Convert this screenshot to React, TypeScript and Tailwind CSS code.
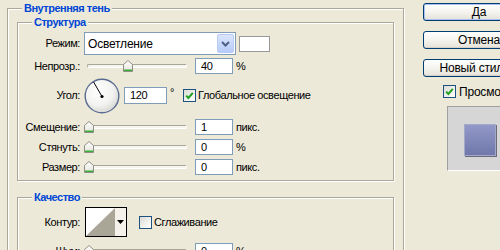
import type { ReactNode } from 'react';

const Thumb = () => (
  <svg width="10" height="12" viewBox="0 0 10 12">
    <defs>
      <linearGradient id="thumbFill" x1="0" y1="0" x2="0" y2="1">
        <stop offset="0" stopColor="#ffffff" />
        <stop offset="1" stopColor="#e4e3db" />
      </linearGradient>
    </defs>
    <path d="M0.5 4.5 L5 0.5 L9.5 4.5 V11.5 H0.5 Z" fill="url(#thumbFill)" stroke="#8f8e84" />
    <rect x="1" y="9.5" width="8" height="1.5" fill="#3aae3a" />
  </svg>
);

const Slider = ({ value }: { value: number }) => (
  <div className="relative w-[106px] h-[12px]">
    <div className="absolute left-[3px] right-[3px] top-[4px] h-[4px] rounded-[2px] border border-[#a9a699] border-b-white border-r-white bg-[#f6f5f0]" />
    <div className="absolute top-0" style={{ left: value }}>
      <Thumb />
    </div>
  </div>
);

const Field = ({ value, className = '' }: { value: string; className?: string }) => (
  <div className={`h-[16px] w-[38px] border border-[#7f9db9] bg-white pl-[5px] leading-[14px] text-black ${className}`}>
    {value}
  </div>
);

const Check = ({ checked }: { checked: boolean }) => (
  <div className="w-[13px] h-[13px] shrink-0 border border-[#1c5180] bg-linear-to-br from-[#dcdcd5] to-white flex items-center justify-center">
    {checked && (
      <svg width="11" height="11" viewBox="0 0 11 11">
        <path d="M2.2 5.6 L4.4 8 L8.8 2.8" fill="none" stroke="#21a121" strokeWidth="2" />
      </svg>
    )}
  </div>
);

const Label = ({ children }: { children: ReactNode }) => (
  <span className="w-[62px] text-right whitespace-nowrap">{children}</span>
);

const Group = ({ title, className = '', children }: { title: string; className?: string; children: ReactNode }) => (
  <div className={`relative border border-[#aca899] shadow-[inset_1px_1px_0_#fff,1px_1px_0_#fff] ${className}`}>
    <span className="absolute -top-[7px] left-[14px] bg-[#ece9d8] px-[2px] leading-[13px] font-bold tracking-[-0.5px] text-[#0046d5] whitespace-nowrap">
      {title}
    </span>
    {children}
  </div>
);

const Dial = () => (
  <svg width="36" height="36" viewBox="0 0 36 36">
    <defs>
      <radialGradient id="dialFill" cx="0.4" cy="0.35" r="0.7">
        <stop offset="0" stopColor="#ffffff" />
        <stop offset="0.6" stopColor="#f3f3f1" />
        <stop offset="1" stopColor="#d4d4d0" />
      </radialGradient>
    </defs>
    <circle cx="18" cy="18" r="16.8" fill="url(#dialFill)" stroke="#5a6b92" strokeWidth="1.4" />
    <line x1="18" y1="18.5" x2="9.6" y2="4" stroke="#000" strokeWidth="1" />
    <circle cx="18" cy="18.5" r="1.6" fill="#000" />
  </svg>
);

const Button = ({ children, primary = false }: { children: ReactNode; primary?: boolean }) => (
  <div
    className={`w-[112px] h-[18px] shrink-0 rounded-[3px] border border-[#003c74] bg-linear-to-b from-white via-[#f5f4ef] to-[#e3e1d8] flex items-center justify-center leading-none whitespace-nowrap text-[12px] tracking-[-0.2px] ${
      primary ? 'shadow-[inset_0_0_0_1px_#a9c2ee]' : 'shadow-[inset_0_-1px_0_#d6d0c5]'
    }`}
  >
    {children}
  </div>
);

export default function App() {
  return (
    <div
      className="w-[500px] h-[250px] overflow-hidden bg-[#ece9d8] text-[11px] tracking-[-0.4px] text-black flex items-start pt-[3px] pl-[7px]"
      style={{ fontFamily: '"Liberation Sans", Arial, sans-serif' }}
    >
      <Group title="Внутренняя тень" className="mt-[5px] w-[397px] h-[260px] shrink-0 pt-[13px] px-[9px]">
        <Group title="Структура" className="pt-[9px] pb-[5px]">
          <div className="flex items-center h-[23px]">
            <Label>Режим:</Label>
            <div className="ml-[4px] w-[152px] h-[23px] border border-[#7f9db9] bg-white flex items-center">
              <span className="pl-[3px] text-[12px] tracking-[-0.2px] flex-1">Осветление</span>
              <div className="w-[17px] h-[19px] mr-[1px] rounded-[2px] border border-[#b9ccf4] bg-linear-to-b from-[#dbe6fd] to-[#b6cbf8] flex items-center justify-center">
                <svg width="9" height="6" viewBox="0 0 9 6">
                  <path d="M1 1 L4.5 4.5 L8 1" fill="none" stroke="#4d6185" strokeWidth="2" />
                </svg>
              </div>
            </div>
            <div className="ml-[3px] w-[31px] h-[16px] border border-[#999] bg-white" />
          </div>

          <div className="flex items-center h-[16px] mt-[3px]">
            <Label>Непрозр.:</Label>
            <div className="ml-[4px]"><Slider value={39} /></div>
            <Field value="40" className="ml-[5px]" />
            <span className="ml-[3px]">%</span>
          </div>

          <div className="flex items-center h-[35px] mt-[4px]">
            <Label>Угол:</Label>
            <div className="ml-[4px] w-[35px] h-[35px]"><Dial /></div>
            <div className="ml-[5px] h-[17px] w-[43px] border border-[#7f9db9] bg-white pl-[5px] leading-[15px]">120</div>
            <span className="w-[16px] pl-[3px] self-start mt-[6px]">°</span>
            <Check checked />
            <span className="ml-[2px]">Глобальное освещение</span>
          </div>

          <div className="flex items-center h-[16px] mt-[6px]">
            <Label>Смещение:</Label>
            <div className="ml-[4px]"><Slider value={0} /></div>
            <Field value="1" className="ml-[5px]" />
            <span className="ml-[3px]">пикс.</span>
          </div>

          <div className="flex items-center h-[16px] mt-[4px]">
            <Label>Стянуть:</Label>
            <div className="ml-[4px]"><Slider value={0} /></div>
            <Field value="0" className="ml-[5px]" />
            <span className="ml-[3px]">%</span>
          </div>

          <div className="flex items-center h-[16px] mt-[4px]">
            <Label>Размер:</Label>
            <div className="ml-[4px]"><Slider value={0} /></div>
            <Field value="0" className="ml-[5px]" />
            <span className="ml-[3px]">пикс.</span>
          </div>
        </Group>

        <Group title="Качество" className="mt-[16px] pt-[9px] h-[80px]">
          <div className="flex items-center h-[30px]">
            <Label>Контур:</Label>
            <div className="ml-[5px] w-[42px] h-[30px] border border-black bg-white flex">
              <svg width="29" height="28" viewBox="0 0 29 28" className="shrink-0">
                <polygon points="0,28 29,0 29,28" fill="#a9a597" />
              </svg>
              <div className="flex-1 bg-[#f3f1ea] flex items-center justify-center">
                <svg width="7" height="4" viewBox="0 0 7 4">
                  <polygon points="0,0 7,0 3.5,4" fill="#000" />
                </svg>
              </div>
            </div>
            <div className="ml-[12px]"><Check checked={false} /></div>
            <span className="ml-[2px]">Сглаживание</span>
          </div>

          <div className="flex items-center h-[16px] mt-[6px]">
            <Label>Шум:</Label>
            <div className="ml-[4px]"><Slider value={0} /></div>
            <Field value="0" className="ml-[5px]" />
            <span className="ml-[3px]">%</span>
          </div>
        </Group>
      </Group>

      <div className="ml-[19px] flex flex-col items-start shrink-0">
        <Button primary>Да</Button>
        <div className="mt-[10px]"><Button>Отмена</Button></div>
        <div className="mt-[10px]"><Button>Новый стиль...</Button></div>
        <div className="mt-[8px] ml-[20px] flex items-center h-[13px]">
          <Check checked />
          <span className="ml-[3px] whitespace-nowrap text-[12px] tracking-[-0.2px]">Просмотр</span>
        </div>
        <div className="mt-[8px] ml-[24px] w-[80px] h-[65px] border border-[#a0a0a0] border-b-white border-r-white bg-[#d6d6d6] pl-[16px] pt-[17px]">
          <div className="w-[32px] h-[32px] border border-[#a4a9c9] bg-linear-to-b from-[#9299c8] to-[#7078ab] shadow-[1px_1px_0_#6a6a7a]" />
        </div>
      </div>
    </div>
  );
}
